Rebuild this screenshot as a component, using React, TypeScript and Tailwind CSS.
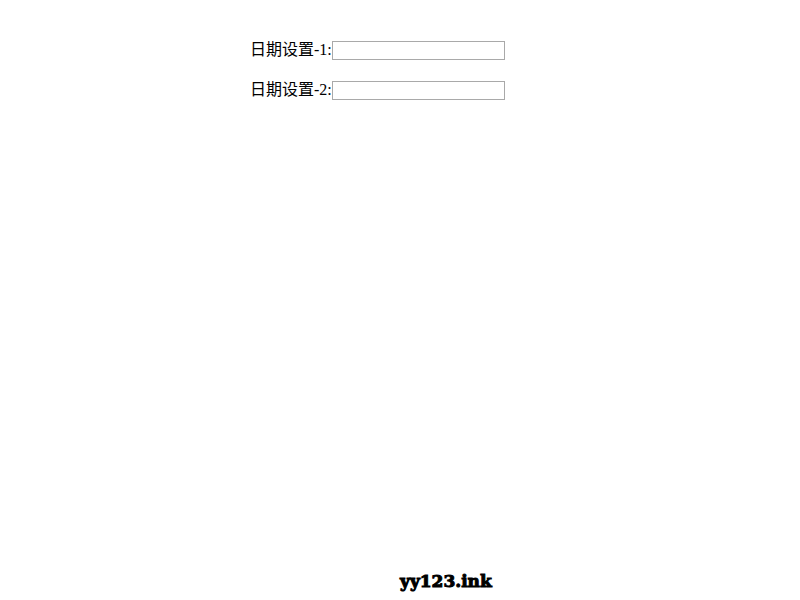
const fields = [
  { id: "date-1", label: "日期设置-1:" },
  { id: "date-2", label: "日期设置-2:" },
];

export default function App() {
  return (
    <div className="flex min-h-screen flex-col bg-white text-black">
      <form className="mx-auto mt-10 flex w-[300px] flex-col gap-5 font-['Liberation_Serif','Noto_Sans_CJK_SC',serif] text-base leading-5">
        {fields.map((field) => (
          <div key={field.id} className="flex items-center">
            <label htmlFor={field.id} className="whitespace-nowrap">
              {field.label}
            </label>
            <input
              id={field.id}
              type="text"
              className="h-[19px] w-[173px] border border-[#a9a9a9] bg-white px-px text-sm outline-none"
            />
          </div>
        ))}
      </form>
      <footer className="mt-auto pb-[7px] pl-[50%] font-['DejaVu_Serif',serif] text-[17px] leading-6 font-bold [-webkit-text-stroke:1px_black]">
        yy123.ink
      </footer>
    </div>
  );
}
